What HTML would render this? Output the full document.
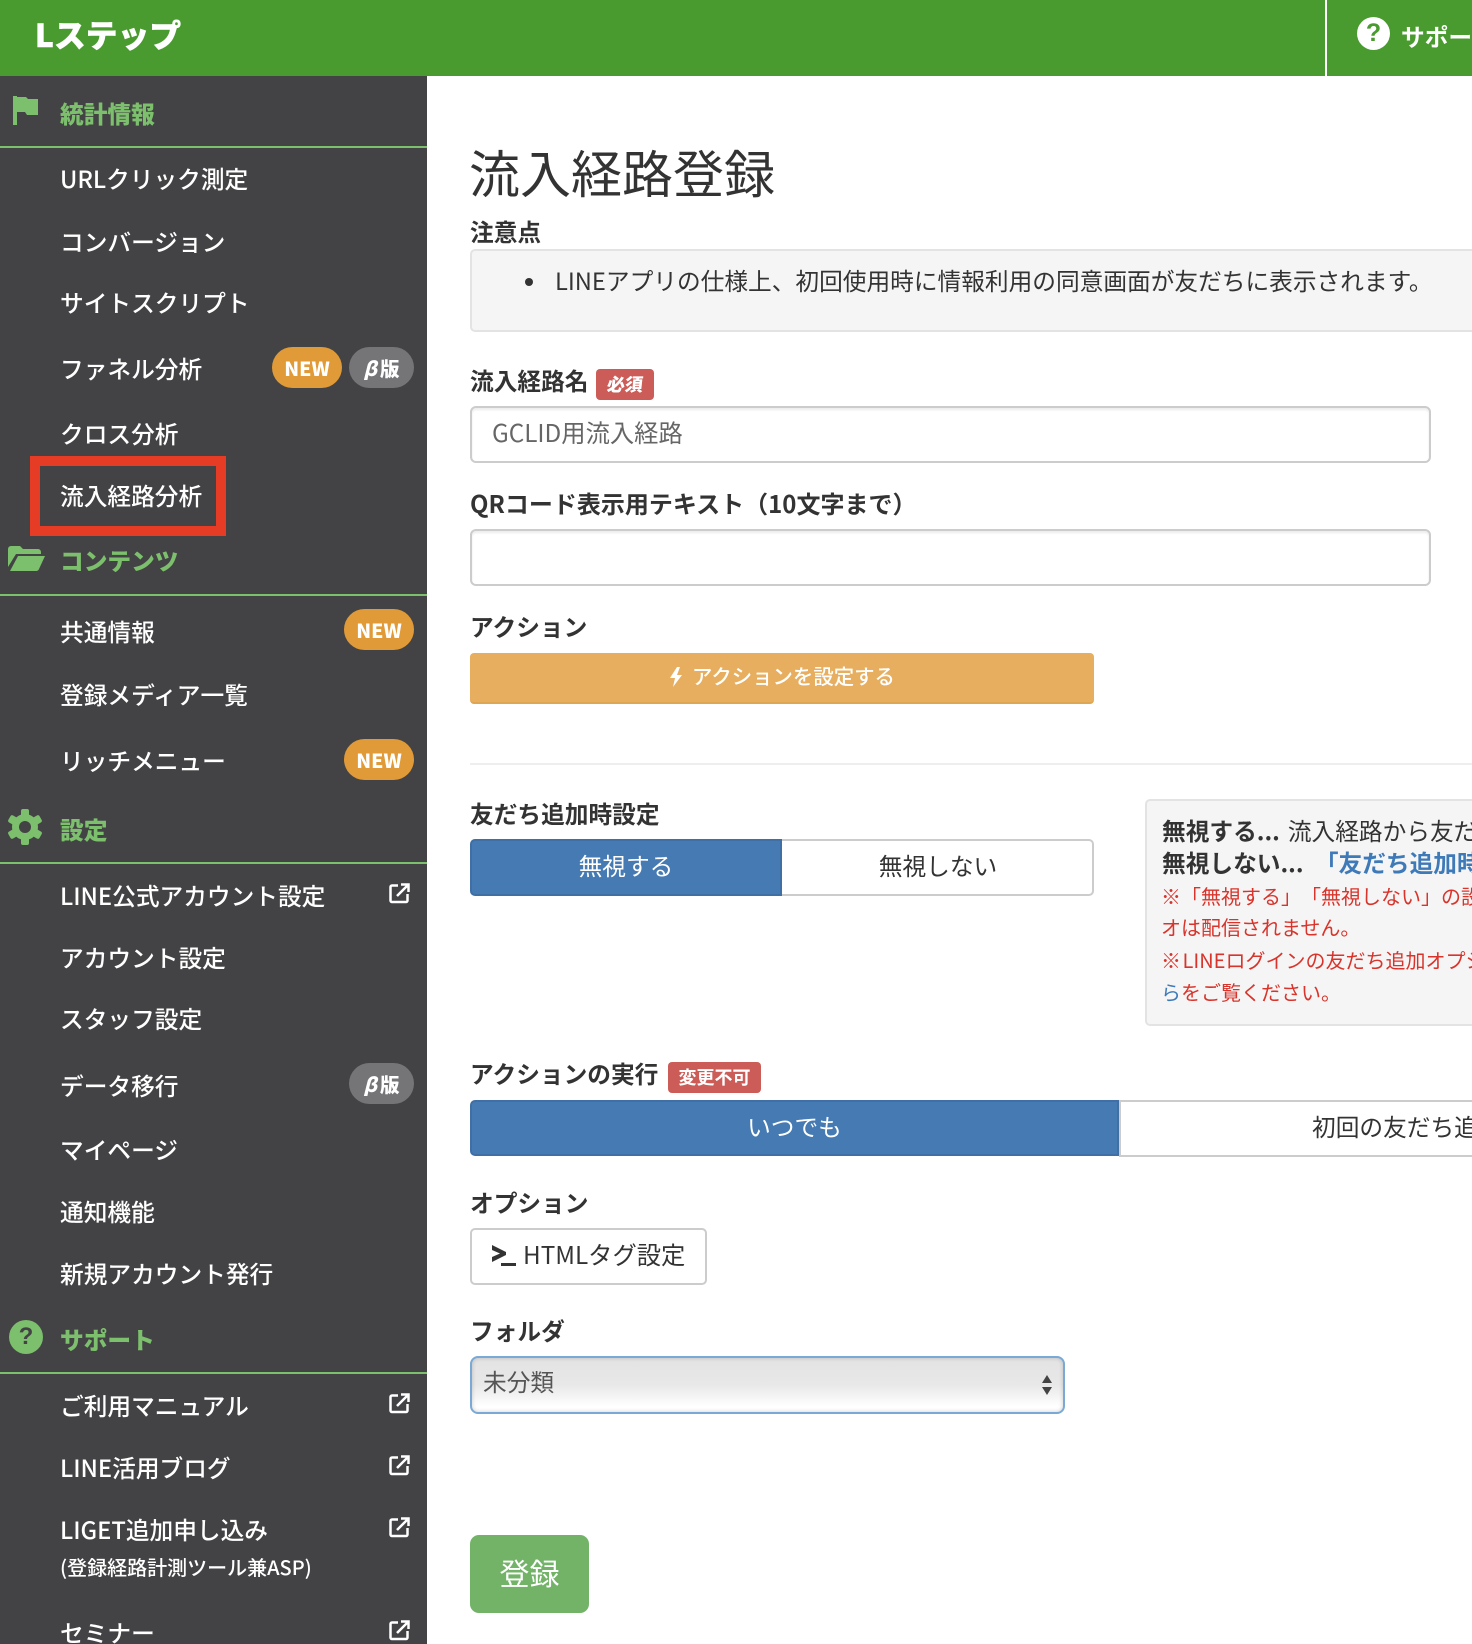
<!DOCTYPE html>
<html lang="ja"><head><meta charset="utf-8"><title>流入経路登録</title>
<style>
html,body{margin:0;padding:0;width:1472px;height:1644px;overflow:hidden;background:#fff}
body{position:relative;font-family:"Liberation Sans","Noto Sans CJK JP",sans-serif;color:#333}
#root{left:0;top:0;width:1472px;height:1644px;overflow:hidden;background:#fff}
div,svg{position:absolute}
.t{white-space:nowrap;line-height:40px;height:40px;margin-top:-1px;font-size:23.7px;font-family:"Noto Sans CJK JP",sans-serif}
.s{left:60px;color:#fff;font-weight:500}
.h{left:60px;color:#7cbf6c;font-weight:900}
.l{left:470px;font-weight:700;color:#333;font-size:23.7px}
.b{height:41px;line-height:41px;border-radius:21px;color:#fff;font-weight:900;font-size:19.5px;text-align:center;font-family:"Noto Sans CJK JP",sans-serif}
.n{background:#e09a37;width:70px}
.g{background:#757578;width:65px;left:349px}
.g i{font-style:italic;font-weight:900}
.g span{display:inline-block;margin-left:3px}
.ln{left:0;width:427px;height:2px;background:#7cbf6c}
.in{left:470px;width:957px;height:53px;border:2px solid #ccc;border-radius:6px;background:#fff;box-shadow:inset 0 2px 2px rgba(0,0,0,.08)}
.r{font-size:20px;color:#d9342b;left:1161px;font-weight:400;text-spacing-trim:space-all}
.x{left:389px}
</style></head><body>
<div id="root">
<!-- header -->
<div style="left:0;top:0;width:1472px;height:76px;background:#4a9b2f"></div>
<div class="t" style="left:35px;top:15px;color:#fff;font-weight:900;font-size:31.5px;letter-spacing:.3px;-webkit-text-stroke:.6px #fff">Lステップ</div>
<div style="left:1325px;top:0;width:2px;height:76px;background:#fff"></div>
<div style="left:1357px;top:17px;width:33px;height:33px;border-radius:50%;background:#fff;color:#4a9b2f;text-align:center;font:700 25px/33px 'Liberation Sans',sans-serif">?</div>
<div class="t" style="left:1401px;top:17px;width:71px;overflow:hidden;color:#fff;font-weight:700">サポート</div>
<!-- sidebar -->
<div style="left:0;top:76px;width:427px;height:1568px;background:#434345"></div>
<svg style="left:13px;top:96px" width="26" height="30" viewBox="0 0 26 30" fill="#7cbf6c"><path d="M0 0h4v29H0z"/><path d="M4 1h9l2 2h10v16H14l-2-3H4z"/></svg>
<div class="t h" style="top:94px">統計情報</div>
<div class="ln" style="top:146px"></div>
<div class="t s" style="top:159px">URLクリック測定</div>
<div class="t s" style="top:222px">コンバージョン</div>
<div class="t s" style="top:283px">サイトスクリプト</div>
<div class="t s" style="top:349px">ファネル分析</div>
<div class="b n" style="left:272px;top:347px">NEW</div>
<div class="b g" style="top:347px"><i>β</i><span>版</span></div>
<div class="t s" style="top:414px">クロス分析</div>
<div class="t s" style="top:476px">流入経路分析</div>
<div style="left:30px;top:456px;width:176px;height:60px;border:10px solid #e63c25"></div>
<svg style="left:8px;top:546px" width="37" height="25" viewBox="0 0 37 25" fill="#7cbf6c"><path d="M0 21V3a3 3 0 0 1 3-3h9l3 3h15a3 3 0 0 1 3 3v2H8z"/><path d="M10 10h27l-6 13a3 3 0 0 1-2.500 2H2z"/></svg>
<div class="t h" style="top:541px">コンテンツ</div>
<div class="ln" style="top:594px"></div>
<div class="t s" style="top:612px">共通情報</div>
<div class="b n" style="left:344px;top:609px">NEW</div>
<div class="t s" style="top:675px">登録メディア一覧</div>
<div class="t s" style="top:741px">リッチメニュー</div>
<div class="b n" style="left:344px;top:739px">NEW</div>
<svg style="left:7px;top:809px" width="36" height="36" viewBox="0 0 36 36"><g fill="#7cbf6c"><circle cx="18" cy="18" r="13"/><rect x="14" y="0" width="8" height="36" rx="2"/><rect x="14" y="0" width="8" height="36" rx="2" transform="rotate(60 18 18)"/><rect x="14" y="0" width="8" height="36" rx="2" transform="rotate(120 18 18)"/></g><circle cx="18" cy="18" r="6" fill="#434345"/></svg>
<div class="t h" style="top:810px">設定</div>
<div class="ln" style="top:862px"></div>
<div class="t s" style="top:876px">LINE公式アカウント設定</div>
<svg class="x" style="top:883px" width="21" height="21" viewBox="0 0 21 21" fill="none" stroke="#fff" stroke-width="2.500"><path d="M9 2.500H3a1.500 1.500 0 0 0-1.500 1.500v13.500A1.500 1.500 0 0 0 3 19h14a1.500 1.500 0 0 0 1.500-1.500V11"/><path d="M8 13L19 2M12 1.500h7.500V9"/></svg>
<div class="t s" style="top:938px">アカウント設定</div>
<div class="t s" style="top:999px">スタッフ設定</div>
<div class="t s" style="top:1066px">データ移行</div>
<div class="b g" style="top:1063px"><i>β</i><span>版</span></div>
<div class="t s" style="top:1130px">マイページ</div>
<div class="t s" style="top:1192px">通知機能</div>
<div class="t s" style="top:1254px">新規アカウント発行</div>
<div style="left:9px;top:1320px;width:34px;height:34px;border-radius:50%;background:#7cbf6c;color:#434345;text-align:center;font:700 24px/34px 'Liberation Sans',sans-serif">?</div>
<div class="t h" style="top:1320px">サポート</div>
<div class="ln" style="top:1372px"></div>
<div class="t s" style="top:1386px">ご利用マニュアル</div>
<svg class="x" style="top:1393px" width="21" height="21" viewBox="0 0 21 21" fill="none" stroke="#fff" stroke-width="2.500"><path d="M9 2.500H3a1.500 1.500 0 0 0-1.500 1.500v13.500A1.500 1.500 0 0 0 3 19h14a1.500 1.500 0 0 0 1.500-1.500V11"/><path d="M8 13L19 2M12 1.500h7.500V9"/></svg>
<div class="t s" style="top:1448px">LINE活用ブログ</div>
<svg class="x" style="top:1455px" width="21" height="21" viewBox="0 0 21 21" fill="none" stroke="#fff" stroke-width="2.500"><path d="M9 2.500H3a1.500 1.500 0 0 0-1.500 1.500v13.500A1.500 1.500 0 0 0 3 19h14a1.500 1.500 0 0 0 1.500-1.500V11"/><path d="M8 13L19 2M12 1.500h7.500V9"/></svg>
<div class="t s" style="top:1510px">LIGET追加申し込み</div>
<svg class="x" style="top:1517px" width="21" height="21" viewBox="0 0 21 21" fill="none" stroke="#fff" stroke-width="2.500"><path d="M9 2.500H3a1.500 1.500 0 0 0-1.500 1.500v13.500A1.500 1.500 0 0 0 3 19h14a1.500 1.500 0 0 0 1.500-1.500V11"/><path d="M8 13L19 2M12 1.500h7.500V9"/></svg>
<div class="t s" style="top:1548px;font-size:20px">(登録経路計測ツール兼ASP)</div>
<div class="t s" style="top:1613px;height:31px">セミナー</div>
<svg class="x" style="top:1620px" width="21" height="21" viewBox="0 0 21 21" fill="none" stroke="#fff" stroke-width="2.500"><path d="M9 2.500H3a1.500 1.500 0 0 0-1.500 1.500v13.500A1.500 1.500 0 0 0 3 19h14a1.500 1.500 0 0 0 1.500-1.500V11"/><path d="M8 13L19 2M12 1.500h7.500V9"/></svg>
<!-- main -->
<div class="t" style="left:469px;top:142px;height:60px;line-height:60px;font-size:51px;color:#333;font-weight:400">流入経路登録</div>
<div class="t l" style="top:212px">注意点</div>
<div style="left:470px;top:249px;width:1002px;height:79px;background:#f5f5f5;border:2px solid #e3e3e3;border-right:0;border-radius:5px 0 0 5px"></div>
<div style="left:525px;top:278px;width:8px;height:8px;border-radius:50%;background:#333"></div>
<div class="t" style="left:555px;top:261px">LINEアプリの仕様上、初回使用時に情報利用の同意画面が友だちに表示されます。</div>
<div class="t l" style="top:361px">流入経路名</div>
<div style="left:596px;top:369px;width:58px;height:31px;background:#cb5c57;border-radius:4px;color:#fff;text-align:center;font:900 18px/31px 'Noto Sans CJK JP',sans-serif"><span style="display:inline-block;transform:skewX(-6deg)">必須</span></div>
<div class="in" style="top:406px"></div>
<div class="t" style="left:492px;top:413px;color:#666;font-size:24.3px">GCLID用流入経路</div>
<div class="t l" style="top:484px;font-size:24px">QRコード表示用テキスト（10文字まで）</div>
<div class="in" style="top:529px"></div>
<div class="t l" style="top:607px">アクション</div>
<div style="left:470px;top:653px;width:624px;height:49px;background:#e6ae5e;border-bottom:2px solid #e0a552;border-radius:4px"></div>
<svg style="left:669px;top:667px" width="14" height="20" viewBox="0 0 14 20" fill="#fff"><path d="M8 0L1 11h5l-2 9 9-12H8l3-8z"/></svg>
<div class="t" style="left:692px;top:656px;font-size:20.400px;color:#fff;font-weight:500">アクションを設定する</div>
<div style="left:470px;top:763px;width:1002px;height:2px;background:#eee"></div>
<div class="t l" style="top:794px">友だち追加時設定</div>
<div style="left:470px;top:839px;width:620px;height:53px;border:2px solid #ccc;border-radius:5px;background:#fff"></div>
<div style="left:470px;top:839px;width:308px;height:53px;background:#457ab3;border:2px solid #3f6fa5;border-radius:5px 0 0 5px"></div>
<div class="t" style="left:470px;width:312px;top:846px;text-align:center;color:#fff">無視する</div>
<div class="t" style="left:782px;width:312px;top:846px;text-align:center;color:#333">無視しない</div>
<div style="left:1145px;top:799px;width:327px;height:223px;background:#f5f5f5;border:2px solid #e3e3e3;border-right:0;border-radius:5px 0 0 5px"></div>
<div class="t" style="left:1162px;top:811px;width:310px;overflow:hidden;font-weight:400"><b>無視する...</b><span style="margin-left:8px">流入経路から友だち追加</span></div>
<div class="t" style="left:1162px;top:843px;width:310px;overflow:hidden"><b>無視しない...</b> <b style="color:#3f7ab8;margin-left:6px">「友だち追加時設定」</b></div>
<div class="t r" style="top:877px;width:311px;overflow:hidden">※「無視する」「無視しない」の設定</div>
<div class="t r" style="top:908px">オは配信されません。</div>
<div class="t r" style="top:941px;width:311px;overflow:hidden;word-spacing:-3px">※ LINEログインの友だち追加オプション</div>
<div class="t r" style="top:973px"><span style="color:#3f7ab8">ら</span>をご覧ください。</div>
<div class="t l" style="top:1054px">アクションの実行</div>
<div style="left:668px;top:1062px;width:93px;height:31px;background:#cb5c57;border-radius:4px;color:#fff;text-align:center;font:700 18px/31px 'Noto Sans CJK JP',sans-serif">変更不可</div>
<div style="left:1119px;top:1100px;width:353px;height:53px;border:2px solid #ccc;border-right:0;background:#fff"></div>
<div style="left:470px;top:1100px;width:645px;height:52px;background:#457ab3;border:2px solid #3f6fa5;border-radius:5px 0 0 5px"></div>
<div class="t" style="left:470px;width:649px;top:1107px;text-align:center;color:#fff">いつでも</div>
<div class="t" style="left:1312px;top:1107px;width:160px;overflow:hidden;color:#333">初回の友だち追加時のみ</div>
<div class="t l" style="top:1183px">オプション</div>
<div style="left:470px;top:1228px;width:233px;height:53px;border:2px solid #ccc;border-radius:5px;background:#fff"></div>
<svg style="left:492px;top:1245px" width="24" height="21" viewBox="0 0 24 21" fill="#333"><path d="M0 0l14 7v3L0 17v-5l8-3.500L0 5z"/><path d="M9 18h15v3H9z"/></svg>
<div class="t" style="left:523px;top:1235px;color:#333;font-size:24.300px">HTMLタグ設定</div>
<div class="t l" style="top:1311px">フォルダ</div>
<div style="left:470px;top:1356px;width:591px;height:54px;border:2px solid #7aa9d6;border-radius:8px;background:linear-gradient(#e3e3e3 0%,#e8e8e8 50%,#fff 90%);box-shadow:inset 0 0 4px rgba(0,0,0,.2)"></div>
<div class="t" style="left:483px;top:1362px;color:#555">未分類</div>
<svg style="left:1041px;top:1375px" width="12" height="21" viewBox="0 0 12 21" fill="#444"><path d="M6 0l5 8H1zM1 12h10l-5 8z"/></svg>
<div style="left:470px;top:1535px;width:119px;height:78px;background:#72b368;border-radius:9px;color:#fff;text-align:center;font:400 30px/75px 'Noto Sans CJK JP',sans-serif">登録</div>
</div>
</body></html>
